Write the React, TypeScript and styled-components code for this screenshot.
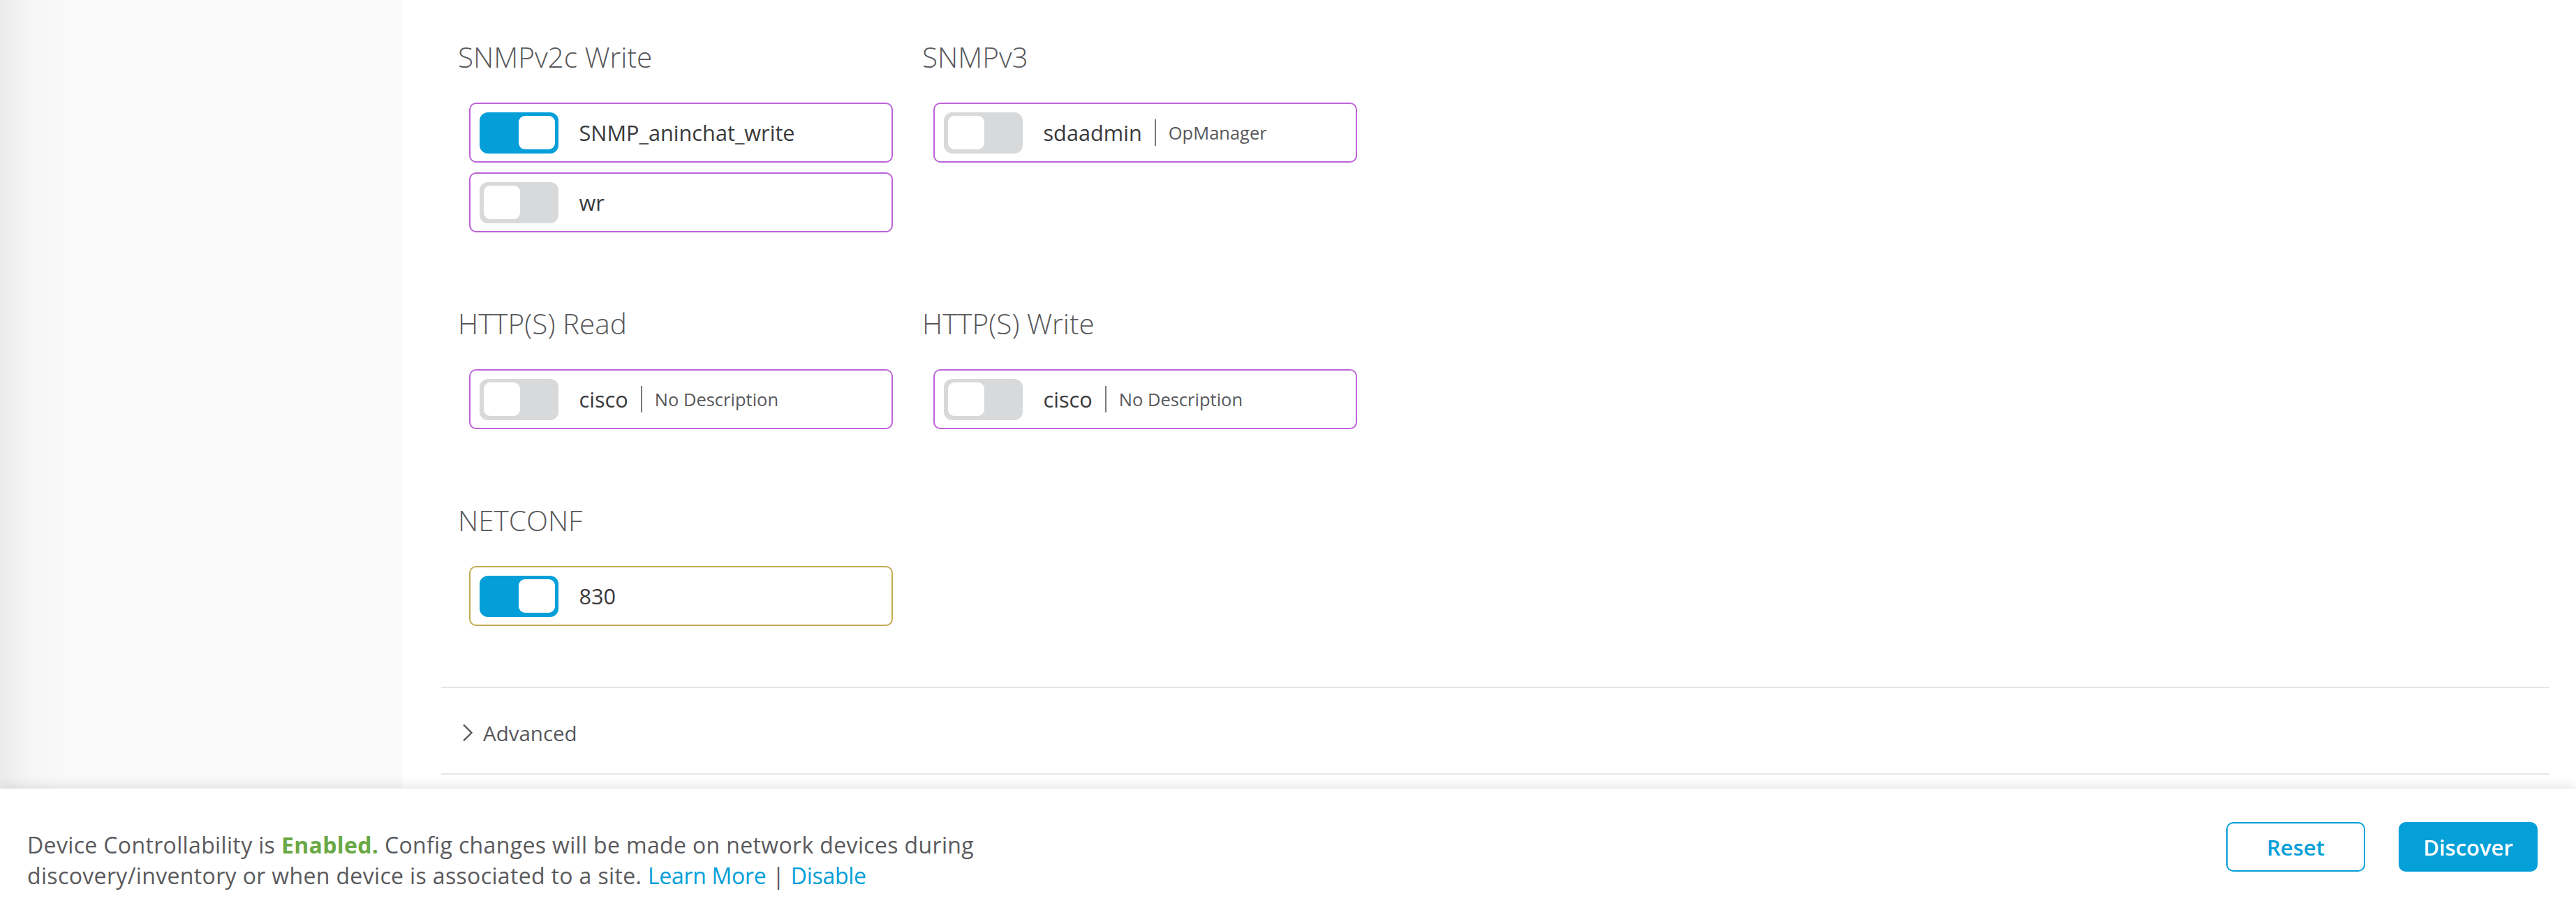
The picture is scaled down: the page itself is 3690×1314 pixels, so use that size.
import React from 'react';
import styled, { createGlobalStyle } from 'styled-components';

const GlobalStyle = createGlobalStyle`
  html, body { margin: 0; padding: 0; }
  body {
    font-family: "Open Sans", "Liberation Sans", Arial, sans-serif;
    background: #ffffff;
  }
  *, *::before, *::after { box-sizing: border-box; }
`;

type Tone = 'purple' | 'gold';
type Item = { on: boolean; label: string; desc?: string; tone?: Tone };
type Group = { title: string; items: Item[] };

const rows: Group[][] = [
  [
    {
      title: 'SNMPv2c Write',
      items: [
        { on: true, label: 'SNMP_aninchat_write' },
        { on: false, label: 'wr' },
      ],
    },
    { title: 'SNMPv3', items: [{ on: false, label: 'sdaadmin', desc: 'OpManager' }] },
  ],
  [
    { title: 'HTTP(S) Read', items: [{ on: false, label: 'cisco', desc: 'No Description' }] },
    { title: 'HTTP(S) Write', items: [{ on: false, label: 'cisco', desc: 'No Description' }] },
  ],
  [{ title: 'NETCONF', items: [{ on: true, label: '830', tone: 'gold' }] }],
];

const Page = styled.div`
  display: flex;
  flex-direction: column;
  width: 100%;
  height: 100vh;
  overflow: hidden;
`;

const Body = styled.div`
  display: flex;
  flex: 1;
  min-height: 0;
`;

const Sidebar = styled.aside`
  width: 576px;
  flex-shrink: 0;
  background: linear-gradient(to right, #ebebeb 0px, #f5f5f5 40px, #f9f9f9 90px);
`;

const Main = styled.main`
  flex: 1;
  background: #ffffff;
  padding: 58px 38px 0 56px;
  display: flex;
  flex-direction: column;
`;

const Rows = styled.div`
  display: flex;
  flex-direction: column;
  gap: 107px;
  padding-left: 24px;
`;

const Row = styled.div`
  display: grid;
  grid-template-columns: repeat(2, 665px);
`;

const Column = styled.section`
  display: flex;
  flex-direction: column;
`;

const Title = styled.h3`
  margin: 0 0 42px;
  font-size: 40.5px;
  line-height: 47px;
  font-weight: 300;
  color: #58585b;
`;

const CardList = styled.div`
  display: flex;
  flex-direction: column;
  gap: 14px;
  padding-left: 16px;
`;

const Card = styled.div<{ $tone: Tone }>`
  width: 607px;
  height: 86px;
  border: 2.5px solid ${(p) => (p.$tone === 'gold' ? '#c5aa52' : '#bd63da')};
  border-radius: 10px;
  display: flex;
  align-items: center;
  padding-left: 12.5px;
`;

const Track = styled.span<{ $on: boolean }>`
  width: 113px;
  height: 59px;
  flex-shrink: 0;
  border-radius: 12px;
  background: ${(p) => (p.$on ? '#049fd9' : '#d8d9db')};
  display: flex;
  align-items: center;
  justify-content: ${(p) => (p.$on ? 'flex-end' : 'flex-start')};
  padding: 0 5px 0 6px;
`;

const Knob = styled.span`
  width: 52px;
  height: 48px;
  border-radius: 9px;
  background: #ffffff;
`;

const Label = styled.span`
  margin-left: 30px;
  font-size: 30.7px;
  color: #39393b;
`;

const Divider = styled.span`
  width: 2px;
  height: 38px;
  background: #7a7a7d;
  margin: 0 18px;
`;

const Desc = styled.span`
  font-size: 25.5px;
  color: #58585b;
`;

const Rule = styled.hr<{ $top?: number }>`
  margin: ${(p) => p.$top ?? 0}px 0 0;
  border: 0;
  height: 2px;
  background: #e6e6e6;
`;

const Advanced = styled.div`
  height: 122px;
  display: flex;
  align-items: center;
  gap: 14px;
  padding: 6px 0 0 30px;
  font-size: 29.5px;
  color: #58585b;
`;

const Footer = styled.footer`
  position: relative;
  z-index: 1;
  height: 184px;
  flex-shrink: 0;
  background: #ffffff;
  box-shadow: 0 -5px 14px rgba(0, 0, 0, 0.09);
  display: flex;
  justify-content: space-between;
  align-items: flex-start;
  padding: 48px 55px 0 39px;
`;

const Message = styled.p`
  margin: 11px 0 0;
  max-width: 1440px;
  font-size: 32px;
  line-height: 44px;
  letter-spacing: 0.35px;
  color: #5a5a5d;
`;

const Enabled = styled.b`
  font-weight: 700;
  color: #6aa844;
`;

const Link = styled.a`
  color: #049fd9;
  text-decoration: none;
  letter-spacing: -0.3px;
`;

const Buttons = styled.div`
  display: flex;
  gap: 48px;
`;

const Button = styled.button<{ $primary?: boolean }>`
  width: 199px;
  height: 71px;
  border-radius: 10px;
  border: 2px solid #049fd9;
  background: ${(p) => (p.$primary ? '#06a0d8' : '#ffffff')};
  color: ${(p) => (p.$primary ? '#ffffff' : '#049fd9')};
  font-family: inherit;
  font-size: 31px;
  font-weight: 600;
  cursor: pointer;
`;

const Chevron = () => (
  <svg width="16" height="26" viewBox="0 0 16 26" aria-hidden="true">
    <polyline points="2,1.5 13.5,13 2,24.5" fill="none" stroke="#58585b" strokeWidth="2.4" strokeLinejoin="miter" />
  </svg>
);

const Toggle = ({ on }: { on: boolean }) => (
  <Track $on={on}>
    <Knob />
  </Track>
);

export default function App() {
  return (
    <>
      <GlobalStyle />
      <Page>
        <Body>
          <Sidebar />
          <Main>
            <Rows>
              {rows.map((row, ri) => (
                <Row key={ri}>
                  {row.map((g) => (
                    <Column key={g.title}>
                      <Title>{g.title}</Title>
                      <CardList>
                        {g.items.map((it, ii) => (
                          <Card key={ii} $tone={it.tone ?? 'purple'}>
                            <Toggle on={it.on} />
                            <Label>{it.label}</Label>
                            {it.desc && (
                              <>
                                <Divider />
                                <Desc>{it.desc}</Desc>
                              </>
                            )}
                          </Card>
                        ))}
                      </CardList>
                    </Column>
                  ))}
                </Row>
              ))}
            </Rows>
            <Rule $top={87} />
            <Advanced>
              <Chevron />
              <span>Advanced</span>
            </Advanced>
            <Rule />
          </Main>
        </Body>
        <Footer>
          <Message>
            Device Controllability is <Enabled>Enabled.</Enabled> Config changes will be made on network devices during
            discovery/inventory or when device is associated to a site. <Link href="#">Learn More</Link> | <Link href="#">Disable</Link>
          </Message>
          <Buttons>
            <Button>Reset</Button>
            <Button $primary>Discover</Button>
          </Buttons>
        </Footer>
      </Page>
    </>
  );
}
